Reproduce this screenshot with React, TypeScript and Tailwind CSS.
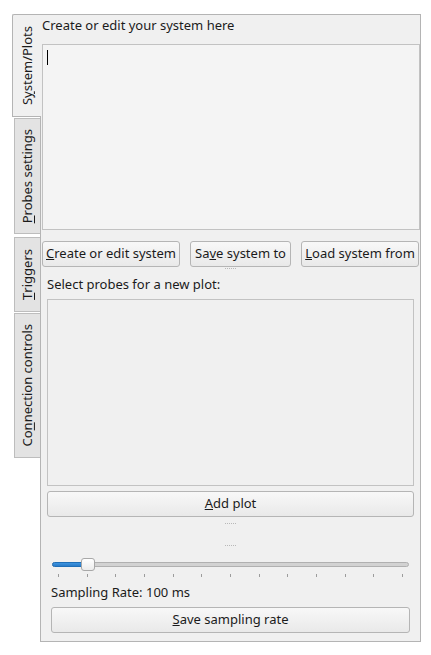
const font = { fontFamily: '"Noto Sans", "Open Sans", sans-serif' };

function Btn({ children, className }: { children: React.ReactNode; className: string }) {
    return (
        <div
            className={`flex items-center justify-center rounded-[3px] border border-[#b5b5b5] bg-gradient-to-b from-[#f8f8f8] to-[#e9e9e9] text-[13px] text-[#1b1b1b] ${className}`}
        >
            {children}
        </div>
    );
}

function Dots() {
    return (
        <div className="flex justify-center gap-[1px]">
            {[0, 1, 2, 3, 4, 5].map((i) => (
                <span key={i} className="h-[1px] w-[1px] bg-[#b8b8b8]" />
            ))}
        </div>
    );
}

function Tab({ label, className }: { label: React.ReactNode; className: string }) {
    return (
        <div className={`flex items-center justify-center text-[13px] text-[#1b1b1b] ${className}`}>
            <span className="rotate-180 [writing-mode:vertical-rl] leading-none">{label}</span>
        </div>
    );
}

export default function App() {
    const ticks = Array.from({ length: 13 }, (_, i) => i);
    return (
        <div className="w-[431px] h-[655px] bg-white flex pt-[14px] pl-[12px]" style={font}>
            <div className="flex flex-col w-[28px]">
                <Tab
                    className="relative z-10 -mr-px h-[103px] w-[29px] rounded-tl-[2px] border-l border-t border-b border-[#b4b4b4] bg-[#f0f0f0]"
                    label={<>S<u>y</u>stem/Plots</>}
                />
                <Tab
                    className="ml-[2px] mt-[1px] h-[116px] w-[26px] border-l border-t border-b border-[#bdbdbd] bg-[#e3e3e3]"
                    label={<><u>P</u>robes settings</>}
                />
                <Tab
                    className="ml-[2px] mt-[3px] h-[75px] w-[26px] border-l border-t border-b border-[#bdbdbd] bg-[#e3e3e3]"
                    label={<><u>T</u>riggers</>}
                />
                <Tab
                    className="ml-[2px] mt-[1px] h-[145px] w-[26px] border-l border-t border-b border-[#bdbdbd] bg-[#e3e3e3]"
                    label={<>Co<u>n</u>nection controls</>}
                />
            </div>
            <div className="w-[381px] h-[628px] border border-[#b4b4b4] bg-[#f0f0f0] flex flex-col">
                <div className="px-[1px] pt-[1px]">
                    <div className="h-[18px] text-[13px] leading-[18px] text-[#1b1b1b]">
                        Create or edit your system here
                    </div>
                    <div className="mt-[10px] h-[186px] w-[378px] border border-[#c2c2c2] bg-[#f4f4f4] pl-[4px] pt-[5px]">
                        <div className="h-[15px] w-[1px] bg-black" />
                    </div>
                    <div className="mt-[11px] flex gap-[10px]">
                        <Btn className="h-[26px] w-[138px]"><span><u>C</u>reate or edit system</span></Btn>
                        <Btn className="h-[26px] w-[101px]"><span>Sa<u>v</u>e system to</span></Btn>
                        <Btn className="h-[26px] w-[118px]"><span><u>L</u>oad system from</span></Btn>
                    </div>
                </div>
                <div className="mt-[1px]"><Dots /></div>
                <div className="px-[6px] flex flex-col">
                    <div className="mt-[6px] h-[18px] text-[13px] leading-[18px] text-[#1b1b1b]">
                        Select probes for a new plot:
                    </div>
                    <div className="mt-[6px] h-[187px] border border-[#c2c2c2] bg-[#f0f0f0]" />
                    <Btn className="mt-[5px] h-[26px]"><span><u>A</u>dd plot</span></Btn>
                </div>
                <div className="mt-[6px]"><Dots /></div>
                <div className="mt-[21px]"><Dots /></div>
                <div className="px-[10px] flex flex-col">
                    <div className="relative mt-[13px] h-[12px] mx-[1px]">
                        <div className="absolute left-0 right-0 top-[3px] h-[5px] rounded-full border border-[#b0b0b0] bg-[#d2d2d2]" />
                        <div className="absolute left-0 w-[34px] top-[3px] h-[5px] rounded-l-full border border-[#1f6fb8] bg-gradient-to-b from-[#3d94e0] to-[#2a7bc8]" />
                        <div className="absolute left-[29px] top-[-1px] h-[13px] w-[14px] rounded-[3px] border border-[#a8a8a8] bg-gradient-to-b from-[#ffffff] to-[#ececec]" />
                    </div>
                    <div className="mt-[3px] h-[3px] flex justify-between px-[7px]">
                        {ticks.map((t) => (
                            <span key={t} className="h-[3px] w-[1px] bg-[#9c9c9c]" />
                        ))}
                    </div>
                    <div className="mt-[6px] h-[18px] text-[13px] leading-[18px] text-[#1b1b1b]">
                        Sampling Rate: 100 ms
                    </div>
                    <Btn className="mt-[6px] h-[26px]"><span><u>S</u>ave sampling rate</span></Btn>
                </div>
            </div>
        </div>
    );
}
